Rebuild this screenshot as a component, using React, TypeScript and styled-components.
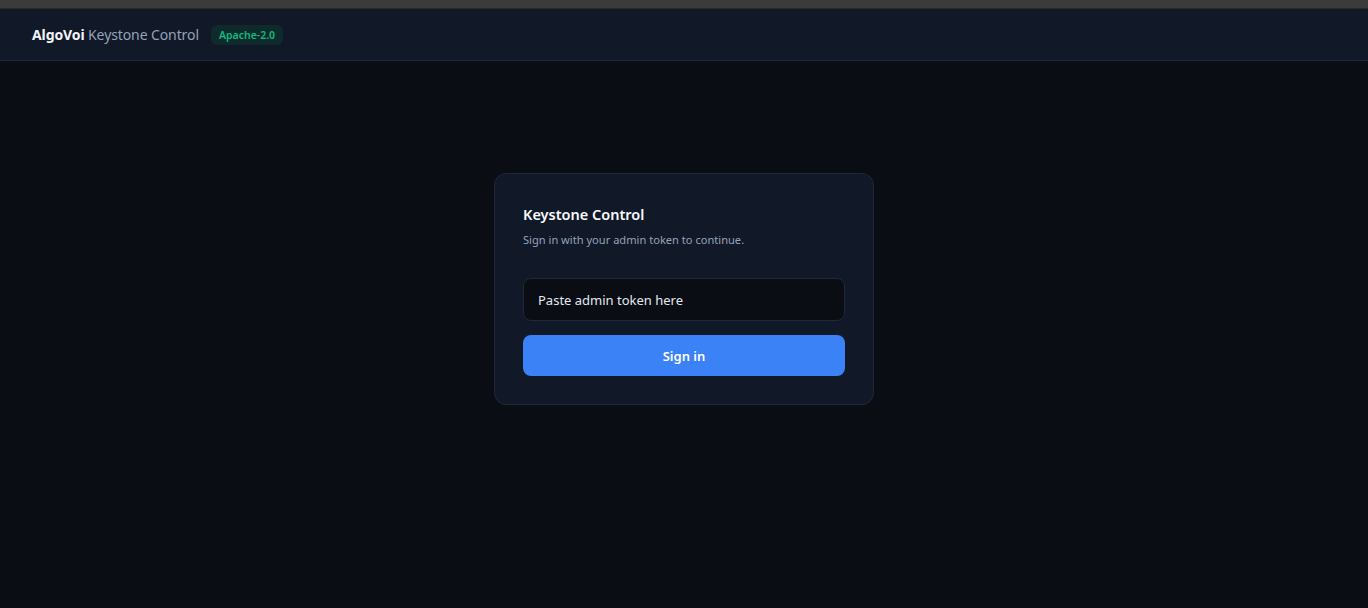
import styled, { createGlobalStyle } from "styled-components";

const GlobalStyle = createGlobalStyle`
  html, body {
    margin: 0;
    padding: 0;
    background: #0a0d14;
    font-family: "Noto Sans", "Open Sans", sans-serif;
  }
  * {
    box-sizing: border-box;
  }
`;

const Page = styled.div`
  min-height: 608px;
  display: flex;
  flex-direction: column;
  background: #0a0d14;
`;

const Chrome = styled.div`
  height: 9px;
  background: #3b3b3b;
  border-bottom: 1px solid #2a2a2a;
`;

const Header = styled.header`
  height: 52px;
  display: flex;
  align-items: center;
  gap: 12px;
  padding: 0 32px;
  background: #111827;
  border-bottom: 1px solid #1f2937;
`;

const Brand = styled.div`
  font-size: 14px;
  color: #94a3b8;
  letter-spacing: -0.1px;
  b {
    color: #f1f5f9;
    font-weight: 700;
  }
`;

const Badge = styled.span`
  font-size: 10.5px;
  font-weight: 600;
  color: #10b981;
  background: #0f2a2a;
  border-radius: 6px;
  padding: 3px 8px;
`;

const Main = styled.main`
  flex: 1;
  display: flex;
  justify-content: center;
  padding-top: 112px;
`;

const Card = styled.form`
  width: 380px;
  height: 232px;
  background: #111827;
  border: 1px solid #1f2937;
  border-radius: 12px;
  padding: 29px 28px 28px;
  display: flex;
  flex-direction: column;
`;

const Title = styled.h1`
  margin: 0;
  font-size: 14.5px;
  line-height: 22px;
  font-weight: 600;
  color: #f8fafc;
`;

const Subtitle = styled.p`
  margin: 7px 0 30px;
  font-size: 11.1px;
  line-height: 16px;
  color: #94a3b8;
`;

const TokenInput = styled.input`
  height: 43px;
  width: 100%;
  background: #0a0d14;
  border: 1px solid #1f2937;
  border-radius: 8px;
  padding: 0 14px;
  font-family: inherit;
  font-size: 13px;
  color: #e2e8f0;
  outline: none;
  &::placeholder {
    color: #e2e8f0;
  }
`;

const SubmitButton = styled.button`
  margin-top: 14px;
  height: 41px;
  width: 100%;
  border: none;
  border-radius: 8px;
  background: #3b82f6;
  color: #ffffff;
  font-family: inherit;
  font-size: 13px;
  font-weight: 600;
  cursor: pointer;
`;

const App = () => {
  return (
    <>
      <GlobalStyle />
      <Page>
        <Chrome />
        <Header>
          <Brand>
            <b>AlgoVoi</b> Keystone Control
          </Brand>
          <Badge>Apache-2.0</Badge>
        </Header>
        <Main>
          <Card onSubmit={(e) => e.preventDefault()}>
            <Title>Keystone Control</Title>
            <Subtitle>Sign in with your admin token to continue.</Subtitle>
            <TokenInput type="password" placeholder="Paste admin token here" />
            <SubmitButton type="submit">Sign in</SubmitButton>
          </Card>
        </Main>
      </Page>
    </>
  );
};

export default App;
